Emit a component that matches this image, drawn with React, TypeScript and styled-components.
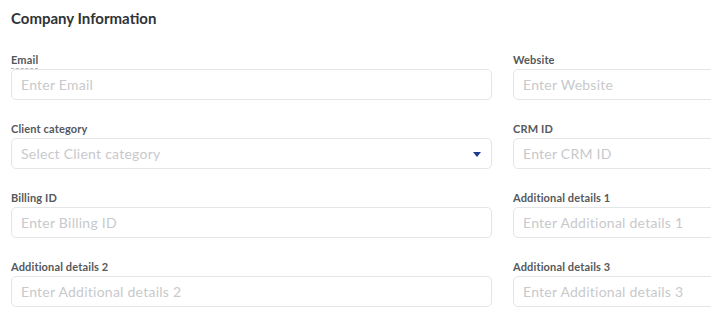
import styled, { createGlobalStyle } from "styled-components";

const GlobalStyle = createGlobalStyle`
  html, body {
    margin: 0;
    padding: 0;
    background: #fff;
    overflow: hidden;
  }
  * {
    box-sizing: border-box;
  }
`;

const Section = styled.section`
  width: 1000px;
  padding: 9px 11px;
  font-family: "Lato", "Noto Sans", sans-serif;
`;

const Title = styled.h2`
  margin: 0 0 26px;
  font-size: 15px;
  font-weight: 700;
  color: #2f3337;
  line-height: 18px;
`;

const Grid = styled.div`
  display: grid;
  grid-template-columns: 481px 481px;
  align-items: start;
  column-gap: 21px;
  row-gap: 22px;
`;

const Field = styled.div`
  display: flex;
  flex-direction: column;
`;

const Label = styled.label<{ $hint?: boolean }>`
  align-self: flex-start;
  font-size: 11px;
  font-weight: 700;
  letter-spacing: 0.15px;
  color: #55585c;
  line-height: 14px;
  margin-bottom: 2px;
  ${(p) =>
    p.$hint &&
    `text-decoration: underline dashed #b5b8bc;
     text-decoration-thickness: 1px;
     text-underline-offset: 4px;`}
`;

const Box = styled.div`
  position: relative;
  height: 31px;
  border: 1px solid #e4e5e7;
  border-radius: 5px;
  display: flex;
  align-items: center;
`;

const Input = styled.input`
  width: 100%;
  height: 100%;
  border: none;
  outline: none;
  background: transparent;
  padding: 0 9px;
  font-family: inherit;
  font-size: 14px;
  letter-spacing: 0.25px;
  color: #333;
  &::placeholder {
    color: #c8c9cc;
  }
`;

const Caret = styled.svg`
  position: absolute;
  right: 10px;
  top: 50%;
  margin-top: -2px;
`;

type F = { label: string; placeholder: string; hint?: boolean; select?: boolean };

const fields: F[] = [
  { label: "Email", placeholder: "Enter Email", hint: true },
  { label: "Website", placeholder: "Enter Website" },
  { label: "Client category", placeholder: "Select Client category", select: true },
  { label: "CRM ID", placeholder: "Enter CRM ID" },
  { label: "Billing ID", placeholder: "Enter Billing ID" },
  { label: "Additional details 1", placeholder: "Enter Additional details 1" },
  { label: "Additional details 2", placeholder: "Enter Additional details 2" },
  { label: "Additional details 3", placeholder: "Enter Additional details 3" },
];

export default function App() {
  return (
    <>
      <GlobalStyle />
      <Section>
        <Title>Company Information</Title>
        <Grid>
          {fields.map((f) => (
            <Field key={f.label}>
              <Label $hint={f.hint}>{f.label}</Label>
              <Box>
                <Input placeholder={f.placeholder} readOnly={f.select} />
                {f.select && (
                  <Caret width="8" height="5" viewBox="0 0 8 5">
                    <path d="M0 0h8L4 5z" fill="#1d3c8f" />
                  </Caret>
                )}
              </Box>
            </Field>
          ))}
        </Grid>
      </Section>
    </>
  );
}
